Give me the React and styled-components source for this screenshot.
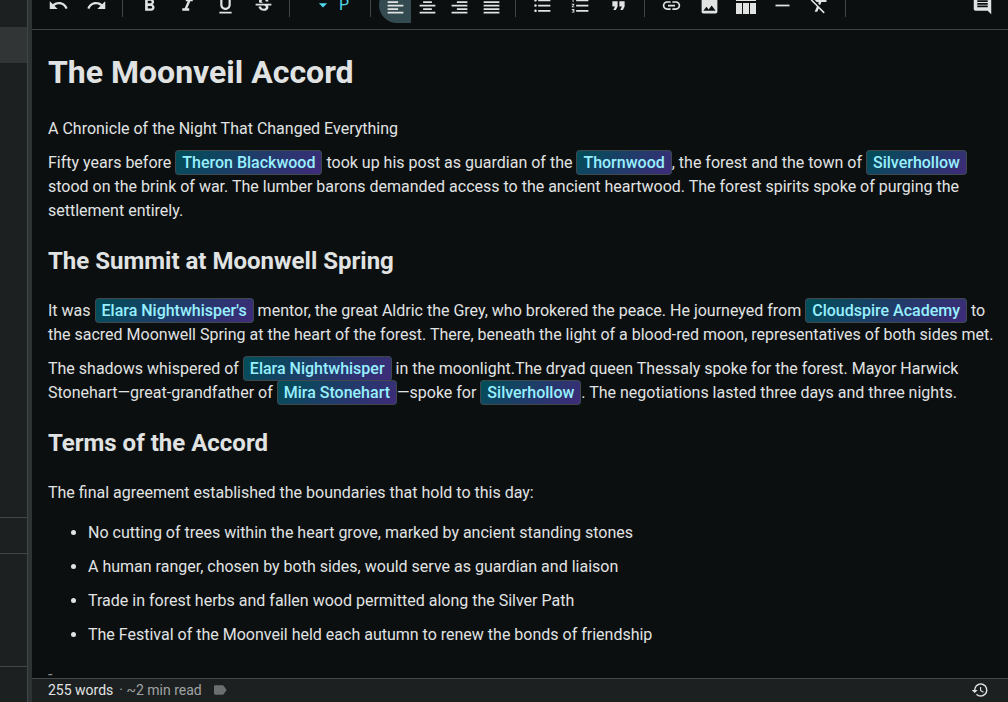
import React from "react";
import styled, { createGlobalStyle, css } from "styled-components";
import {
  MdUndo, MdRedo, MdFormatBold, MdFormatItalic, MdFormatUnderlined, MdStrikethroughS,
  MdArrowDropDown, MdFormatAlignLeft, MdFormatAlignCenter, MdFormatAlignRight,
  MdFormatAlignJustify, MdFormatListBulleted, MdFormatListNumbered, MdFormatQuote,
  MdLink, MdImage, MdHorizontalRule, MdFormatClear, MdComment, MdLabel, MdHistory,
} from "react-icons/md";

const Global = createGlobalStyle`
  *, *::before, *::after { box-sizing: border-box; }
  body {
    margin: 0;
    background: #0b0f10;
    color: #e1e3e3;
    font: 400 16px/24px Roboto, "Liberation Sans", sans-serif;
  }
`;

const Shell = styled.div`
  display: flex;
  height: 100vh;
  overflow: hidden;
`;

const Sidebar = styled.aside`
  display: flex;
  flex-direction: column;
  flex: 0 0 28px;
  padding-top: 27px;
  background: #1d2021;
  border-right: 1px solid #3f4647;
`;

const ActiveEntry = styled.div`
  flex: 0 0 36px;
  background: #323536;
`;

const SidebarBody = styled.div`
  flex: 1;
`;

const SidebarSection = styled.div`
  flex: 0 0 ${(p) => p.$height}px;
  border-top: 1px solid #3f4647;
`;

const Splitter = styled.div`
  flex: 0 0 4px;
  background: #2d3233;
`;

const Editor = styled.main`
  display: flex;
  flex-direction: column;
  flex: 1;
  min-width: 0;
`;

const ToolbarFrame = styled.header`
  display: flex;
  flex: 0 0 30px;
  flex-direction: column;
  justify-content: flex-end;
  overflow: hidden;
  padding: 0 7px 6px;
  border-bottom: 1px solid #3f4344;
`;

const Toolbar = styled.div`
  display: flex;
  flex: 0 0 36px;
  align-items: center;
`;

const resetButton = css`
  margin: 0;
  padding: 0;
  border: 0;
  background: none;
  color: inherit;
  font: inherit;
  cursor: pointer;
`;

const ToolButton = styled.button`
  ${resetButton}
  display: flex;
  flex: none;
  align-items: center;
  justify-content: center;
  width: ${(p) => p.$width || 38}px;
  height: 36px;
  font-size: 21px;
  ${(p) => p.$active && css`
    background: #334b50;
    border-radius: 20px 0 0 20px;
  `}
`;

const FormatPickers = styled.div`
  display: flex;
  align-items: center;
  justify-content: flex-end;
  width: 66px;
  padding-right: 12px;
  color: #4fd8eb;
`;

const Picker = styled.button`
  ${resetButton}
  display: flex;
  align-items: center;
  justify-content: center;
  width: ${(p) => p.$width}px;
  height: 36px;

  svg { font-size: 20px; }
`;

const Separator = styled.span`
  flex: none;
  width: 1px;
  height: 24px;
  margin: 0 7px;
  background: #3f4647;
`;

const AlignGroup = styled.div`
  display: flex;
  padding: 0 1px;
`;

const Spacer = styled.span`
  flex: 1;
`;

const Page = styled.article`
  flex: 1;
  min-height: 0;
  overflow: hidden;
  padding: 16px 12px 0 16px;

  h1, h2, p, ul { margin: 0; }
  h1 { margin: 8px 0 27px; font-size: 32px; line-height: 36px; font-weight: 700; }
  h2 { margin: 22px 0; font-size: 24px; line-height: 32px; font-weight: 700; }
  p { margin-bottom: 10px; }
  ul { padding-left: 40px; margin: 16px 0; }
`;

const Mention = styled.a`
  padding: 2px 6px;
  border: 1px solid #3f484a;
  border-radius: 4px;
  background: linear-gradient(135deg, #004f58, #3f2a7a);
  color: #97f0ff;
  font-weight: 500;
  text-decoration: none;
`;

const Faded = styled.p`
  color: #8b8f90;
`;

const StatusBar = styled.footer`
  display: flex;
  flex: 0 0 24px;
  align-items: center;
  padding: 0 17px 1px 16px;
  border-top: 1px solid #3f484a;
  background: #1d2021;
  font-size: 14px;
  line-height: 20px;
`;

const ReadTime = styled.span`
  margin: 0 8px 0 6px;
  color: #a0a3a3;
`;

const StatusButton = styled.button`
  ${resetButton}
  display: flex;
  padding: 0 2px;
  font-size: ${(p) => p.$size}px;
  color: ${(p) => (p.$muted ? "#6b6f70" : "#e1e3e3")};
`;

const TableIcon = () => (
  <svg width="20" height="20" viewBox="0 0 20 20" fill="currentColor" aria-hidden="true">
    <path d="M0 1h20v5H0zM0 8h6v11H0zM7 8h6v11H7zM14 8h6v11h-6z" />
  </svg>
);

const Tool = ({ icon: Icon, label, ...rest }) => (
  <ToolButton type="button" aria-label={label} {...rest}><Icon /></ToolButton>
);

const Ref = ({ children }) => <Mention href="#">{children}</Mention>;

const terms = [
  "No cutting of trees within the heart grove, marked by ancient standing stones",
  "A human ranger, chosen by both sides, would serve as guardian and liaison",
  "Trade in forest herbs and fallen wood permitted along the Silver Path",
  "The Festival of the Moonveil held each autumn to renew the bonds of friendship",
];

export default function App() {
  return (
    <>
      <Global />
      <Shell>
        <Sidebar>
          <ActiveEntry />
          <SidebarBody />
          <SidebarSection $height={36} />
          <SidebarSection $height={113} />
          <SidebarSection $height={36} />
        </Sidebar>
        <Splitter />
        <Editor>
          <ToolbarFrame>
            <Toolbar role="toolbar">
              <Tool icon={MdUndo} label="Undo" />
              <Tool icon={MdRedo} label="Redo" />
              <Separator />
              <Tool icon={MdFormatBold} label="Bold" />
              <Tool icon={MdFormatItalic} label="Italic" />
              <Tool icon={MdFormatUnderlined} label="Underline" />
              <Tool icon={MdStrikethroughS} label="Strikethrough" />
              <Separator />
              <FormatPickers>
                <Picker type="button" $width={28} aria-label="Text style"><MdArrowDropDown /></Picker>
                <Picker type="button" $width={14}>P</Picker>
              </FormatPickers>
              <Separator />
              <AlignGroup>
                <Tool icon={MdFormatAlignLeft} label="Align left" $width={32} $active />
                <Tool icon={MdFormatAlignCenter} label="Align center" $width={32} />
                <Tool icon={MdFormatAlignRight} label="Align right" $width={32} />
                <Tool icon={MdFormatAlignJustify} label="Justify" $width={32} />
              </AlignGroup>
              <Separator />
              <Tool icon={MdFormatListBulleted} label="Bulleted list" />
              <Tool icon={MdFormatListNumbered} label="Numbered list" />
              <Tool icon={MdFormatQuote} label="Quote" />
              <Separator />
              <Tool icon={MdLink} label="Link" />
              <Tool icon={MdImage} label="Image" />
              <Tool icon={TableIcon} label="Table" $width={36} />
              <Tool icon={MdHorizontalRule} label="Horizontal rule" $width={36} />
              <Tool icon={MdFormatClear} label="Clear formatting" />
              <Separator />
              <Spacer />
              <Tool icon={MdComment} label="Comments" />
            </Toolbar>
          </ToolbarFrame>
          <Page>
            <h1>The Moonveil Accord</h1>
            <p>A Chronicle of the Night That Changed Everything</p>
            <p>
              Fifty years before <Ref>Theron Blackwood</Ref> took up his post as guardian of
              the <Ref>Thornwood</Ref>, the forest and the town of <Ref>Silverhollow</Ref> stood
              on the brink of war. The lumber barons demanded access to the ancient heartwood.
              The forest spirits spoke of purging the settlement entirely.
            </p>
            <h2>The Summit at Moonwell Spring</h2>
            <p>
              It was <Ref>Elara Nightwhisper's</Ref> mentor, the great Aldric the Grey, who
              brokered the peace. He journeyed from <Ref>Cloudspire Academy</Ref> to the sacred
              Moonwell Spring at the heart of the forest. There, beneath the light of a blood-red
              moon, representatives of both sides met.
            </p>
            <p>
              The shadows whispered of <Ref>Elara Nightwhisper</Ref> in the moonlight.The dryad
              queen Thessaly spoke for the forest. Mayor Harwick Stonehart—great-grandfather
              of <Ref>Mira Stonehart</Ref>—spoke for <Ref>Silverhollow</Ref>. The negotiations
              lasted three days and three nights.
            </p>
            <h2>Terms of the Accord</h2>
            <p>The final agreement established the boundaries that hold to this day:</p>
            <ul>
              {terms.map((t) => <li key={t}><p>{t}</p></li>)}
            </ul>
            <Faded>-</Faded>
          </Page>
          <StatusBar>
            <span>255 words</span>
            <ReadTime>· ~2 min read</ReadTime>
            <StatusButton type="button" $size={16} $muted aria-label="Label"><MdLabel /></StatusButton>
            <Spacer />
            <StatusButton type="button" $size={18} aria-label="History"><MdHistory /></StatusButton>
          </StatusBar>
        </Editor>
      </Shell>
    </>
  );
}
